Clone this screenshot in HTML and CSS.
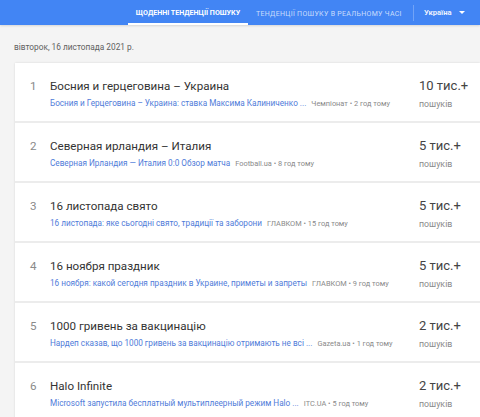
FILE: index.html
```html
<!DOCTYPE html>
<html lang="uk">
<head>
<meta charset="utf-8">
<title>Тенденції пошуку</title>
<link rel="stylesheet" href="styles.css">
</head>
<body>
<header class="topbar">
  <div class="tab tab-active">ЩОДЕННІ ТЕНДЕНЦІЇ ПОШУКУ</div>
  <div class="tab">ТЕНДЕНЦІЇ ПОШУКУ В РЕАЛЬНОМУ ЧАСІ</div>
  <div class="divider"></div>
  <div class="region">Україна <span class="caret"></span></div>
</header>
<div class="date">вівторок, 16 листопада 2021 р.</div>
<main class="card">
  <div class="row">
    <div class="rank">1</div>
    <div class="main">
      <div class="title">Босния и герцеговина – Украина</div>
      <div class="sub"><span class="link">Босния и Герцеговина – Украина: ставка Максима Калиниченко ...</span><span class="src">Чемпіонат • 2 год тому</span></div>
    </div>
    <div class="count"><div class="num">10 тис.+</div><div class="lbl">пошуків</div></div>
  </div>
  <div class="row">
    <div class="rank">2</div>
    <div class="main">
      <div class="title">Северная ирландия – Италия</div>
      <div class="sub"><span class="link">Северная Ирландия — Италия 0:0 Обзор матча</span><span class="src">Football.ua • 8 год тому</span></div>
    </div>
    <div class="count"><div class="num">5 тис.+</div><div class="lbl">пошуків</div></div>
  </div>
  <div class="row">
    <div class="rank">3</div>
    <div class="main">
      <div class="title">16 листопада свято</div>
      <div class="sub"><span class="link">16 листопада: яке сьогодні свято, традиції та заборони</span><span class="src">ГЛАВКОМ • 15 год тому</span></div>
    </div>
    <div class="count"><div class="num">5 тис.+</div><div class="lbl">пошуків</div></div>
  </div>
  <div class="row">
    <div class="rank">4</div>
    <div class="main">
      <div class="title">16 ноября праздник</div>
      <div class="sub"><span class="link">16 ноября: какой сегодня праздник в Украине, приметы и запреты</span><span class="src">ГЛАВКОМ • 9 год тому</span></div>
    </div>
    <div class="count"><div class="num">5 тис.+</div><div class="lbl">пошуків</div></div>
  </div>
  <div class="row">
    <div class="rank">5</div>
    <div class="main">
      <div class="title">1000 гривень за вакцинацію</div>
      <div class="sub"><span class="link">Нардеп сказав, що 1000 гривень за вакцинацію отримають не всі ...</span><span class="src">Gazeta.ua • 1 год тому</span></div>
    </div>
    <div class="count"><div class="num">2 тис.+</div><div class="lbl">пошуків</div></div>
  </div>
  <div class="row">
    <div class="rank">6</div>
    <div class="main">
      <div class="title">Halo Infinite</div>
      <div class="sub"><span class="link">Microsoft запустила бесплатный мультиплеерный режим Halo ...</span><span class="src">ITC.UA • 5 год тому</span></div>
    </div>
    <div class="count"><div class="num">2 тис.+</div><div class="lbl">пошуків</div></div>
  </div>
</main>
</body>
</html>
```

FILE: styles.css
```css
html, body {
  margin: 0;
  padding: 0;
}
body {
  background: #f4f4f4;
  font-family: Roboto, "Noto Sans", Arial, sans-serif;
  width: 480px;
  height: 417px;
  overflow: hidden;
}
.topbar {
  height: 25px;
  background: #4285f4;
  display: flex;
  align-items: stretch;
  padding-left: 128px;
  box-sizing: border-box;
  box-shadow: 0 1px 2px rgba(0,0,0,0.12);
}
.tab {
  display: flex;
  align-items: center;
  width: 153px;
  padding: 2px 8px 0;
  font-size: 7px;
  letter-spacing: 0.3px;
  color: rgba(255,255,255,0.72);
  box-sizing: border-box;
  white-space: nowrap;
  flex-shrink: 0;
}
.tab-active {
  width: 120px;
  justify-content: center;
  padding: 2px 0 0 0;
  color: #fff;
  font-weight: 700;
  font-size: 7.1px;
  letter-spacing: 0;
  border-bottom: 2px solid #fff;
}
.divider {
  width: 1px;
  height: 16px;
  align-self: center;
  background: rgba(255,255,255,0.25);
  margin-left: 12px;
  flex-shrink: 0;
}
.region {
  display: flex;
  align-items: center;
  margin-left: 10px;
  color: rgba(255,255,255,0.92);
  font-weight: 700;
  font-size: 7.6px;
  white-space: nowrap;
}
.caret {
  width: 0;
  height: 0;
  border-left: 3px solid transparent;
  border-right: 3px solid transparent;
  border-top: 3.5px solid #fff;
  margin-left: 7px;
}
.date {
  margin: 16px 0 0 14px;
  font-size: 8.3px;
  line-height: 12px;
  color: #5f5f5f;
}
.card {
  margin: 10px 0 0 15px;
  background: #fff;
  box-shadow: 0 0 2px rgba(0,0,0,0.12);
}
.row {
  display: flex;
  height: 60px;
  box-sizing: border-box;
  border-bottom: 2px solid #ececec;
}
.rank {
  width: 35px;
  padding: 15px 0 0 15px;
  box-sizing: border-box;
  font-size: 11.6px;
  line-height: 16px;
  color: #8a8a8a;
}
.main {
  flex: 1;
  padding-top: 15px;
  min-width: 0;
}
.title {
  font-size: 11.6px;
  line-height: 16px;
  color: #333;
  white-space: nowrap;
}
.sub {
  margin-top: 3px;
  font-size: 8.2px;
  line-height: 12px;
  white-space: nowrap;
}
.link {
  color: #4f7bd9;
}
.src {
  margin-left: 5px;
  color: #8a8a8a;
  font-size: 7.4px;
}
.count {
  width: 61px;
  padding-top: 14px;
  box-sizing: border-box;
}
.num {
  font-size: 13px;
  line-height: 18px;
  color: #444;
}
.lbl {
  margin-top: 4px;
  font-size: 8.8px;
  line-height: 11px;
  color: #8a8a8a;
}
```
